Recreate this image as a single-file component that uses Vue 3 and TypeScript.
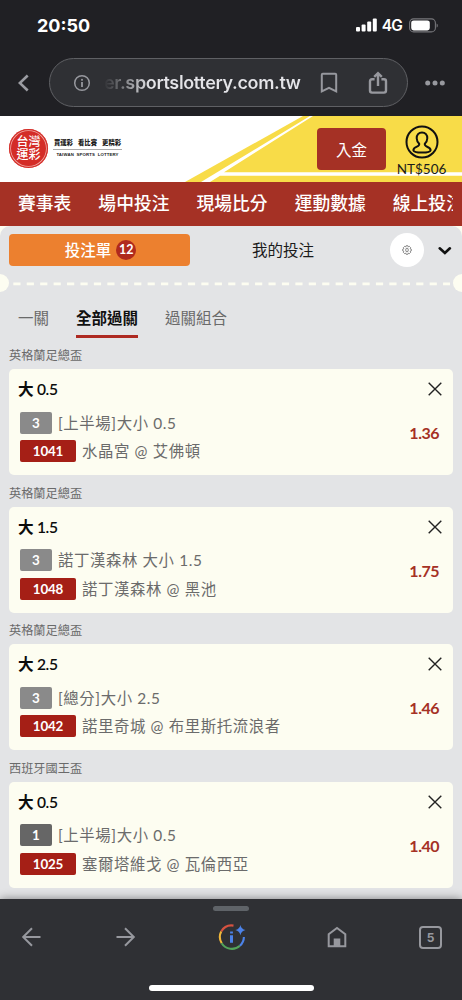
<script setup lang="ts">
interface Bet {
  league: string
  pick: string
  min: number
  market: string
  code: string
  match: string
  odds: string
}

const navItems: string[] = ['賽事表', '場中投注', '現場比分', '運動數據', '線上投注']

const bets: Bet[] = [
  { league: '英格蘭足總盃', pick: '大 0.5', min: 3, market: '[上半場]大小 0.5', code: '1041', match: '水晶宮 @ 艾佛頓', odds: '1.36' },
  { league: '英格蘭足總盃', pick: '大 1.5', min: 3, market: '諾丁漢森林 大小 1.5', code: '1048', match: '諾丁漢森林 @ 黑池', odds: '1.75' },
  { league: '英格蘭足總盃', pick: '大 2.5', min: 3, market: '[總分]大小 2.5', code: '1042', match: '諾里奇城 @ 布里斯托流浪者', odds: '1.46' },
  { league: '西班牙國王盃', pick: '大 0.5', min: 1, market: '[上半場]大小 0.5', code: '1025', match: '塞爾塔維戈 @ 瓦倫西亞', odds: '1.40' },
]
</script>

<template>
  <div class="phone">
    <div class="status">
      <span class="clock">20:50</span>
      <div class="status-right">
        <svg class="signal" width="21" height="14" viewBox="0 0 21 14" fill="#fff">
          <rect x="0" y="9" width="4" height="4.6" rx="1" />
          <rect x="5.6" y="6.5" width="4" height="7.1" rx="1" />
          <rect x="11.2" y="3.6" width="4" height="10" rx="1" />
          <rect x="16.8" y="0.4" width="4" height="13.2" rx="1" />
        </svg>
        <span class="net">4G</span>
        <svg width="30" height="15" viewBox="0 0 30 15">
          <rect x="0.6" y="0.9" width="25.8" height="13" rx="4" fill="none" stroke="#77777b" stroke-width="1.1" />
          <rect x="2.2" y="2.4" width="18.6" height="10" rx="2.4" fill="#fff" />
          <path d="M27.6 5.4c1.6.6 1.6 3.6 0 4.2z" fill="#77777b" />
        </svg>
      </div>
    </div>

    <div class="toolbar">
      <svg class="back" width="12" height="18" viewBox="0 0 12 18">
        <path d="M9.7 1.5 1.800 9l7.900 7.500" fill="none" stroke="#9b9ca2" stroke-width="2.6" />
      </svg>
      <div class="omnibox">
        <svg class="info" width="18" height="18" viewBox="0 0 18 18">
          <circle cx="9" cy="9" r="7.3" fill="none" stroke="#97989e" stroke-width="1.5" />
          <rect x="8.1" y="8" width="1.8" height="5" fill="#97989e" />
          <rect x="8.1" y="4.9" width="1.8" height="1.8" fill="#97989e" />
        </svg>
        <span class="url">er.sportslottery.com.tw</span>
        <svg class="bookmark" width="18" height="22" viewBox="0 0 18 22">
          <path d="M1.8 2.8q0-1 1-1h12.4q1 0 1 1v16.6L9 15.8l-7.2 3.6z" fill="none" stroke="#97989e" stroke-width="2" />
        </svg>
        <svg class="share" width="20" height="24" viewBox="0 0 20 24">
          <path d="M6.600 8.300H4q-2 0-2 2v9.300q0 2 2 2h12q2 0 2-2v-9.300q0-2-2-2h-2.600M10 15V3M6.200 5.900 10 2.100l3.800 3.800" fill="none" stroke="#97989e" stroke-width="2.400" />
        </svg>
      </div>
      <svg class="more" width="20" height="6" viewBox="0 0 20 6" fill="#97989e">
        <circle cx="2.7" cy="3" r="2.5" /><circle cx="10" cy="3" r="2.5" /><circle cx="17.3" cy="3" r="2.5" />
      </svg>
    </div>

    <header class="brand">
      <svg class="stripes" width="462" height="66" viewBox="0 0 462 66">
        <path d="M303 0H462V66H185z" fill="#f8dc48" />
        <path d="M310 0h3L224 56.300H462v3.400H220L210 66h-9z" fill="#fff" />
      </svg>
      <div class="logo">
        <div class="seal"><span>台灣</span><span>運彩</span></div>
        <div class="slogan">
          <div class="zh"><span>買運彩</span><span>看比賽</span><span>更精彩</span></div>
          <div class="en">TAIWAN&nbsp; SPORTS&nbsp; LOTTERY</div>
        </div>
      </div>
      <button class="deposit">入金</button>
      <div class="account">
        <svg width="34" height="34" viewBox="0 0 34 34" fill="none" stroke="#111" stroke-width="2">
          <circle cx="17" cy="17" r="15.5" />
          <path d="M17 7.500c-3.400 0-5.400 2.600-5.300 5.700.1 2.400 1.100 4.300 2.500 5.600.3 1.600-.6 2.200-2.300 2.900-2.300.9-3.600 2.200-3.500 3.600.2 1.700 4.200 2.200 8.600 2.200s8.400-.5 8.600-2.200c.1-1.400-1.200-2.700-3.500-3.600-1.700-.7-2.600-1.300-2.300-2.900 1.400-1.300 2.400-3.200 2.500-5.600.1-3.100-1.900-5.700-5.300-5.700z" stroke-linejoin="round" />
        </svg>
        <span>NT$506</span>
      </div>
    </header>

    <nav class="nav"><div class="nav-track">
      <span v-for="item in navItems" :key="item">{{ item }}</span>
    </div></nav>

    <main class="slip">
      <section class="panel">
        <div class="slip-head">
          <div class="slip-tab">投注單<b>12</b></div>
          <div class="mine">我的投注</div>
          <div class="gear">
            <svg width="10" height="10" viewBox="0 0 10 10" fill="none" stroke="#555" stroke-width="0.7">
              <path d="M4 .8h2l.4 1 1-.4 1.200 1.200-.4 1 1 .4v2l-1 .4.4 1-1.200 1.200-1-.4-.4 1H4l-.4-1-1 .4-1.200-1.200.4-1-1-.4V4l1-.4-.4-1 1.200-1.200 1 .4z" />
              <ellipse cx="5" cy="5" rx="1.3" ry="1.9" />
            </svg>
          </div>
          <svg class="chev" width="14" height="9" viewBox="0 0 14 9">
            <path d="M1.700 2.300 6.900 7l5-4.700" fill="none" stroke="#111" stroke-width="2.6" stroke-linecap="round" />
          </svg>
        </div>
        <svg class="perforation" width="462" height="18" viewBox="0 0 462 18" fill="#fdfdf1">
          <circle cx="0" cy="9" r="9" />
          <circle cx="462" cy="9" r="9" />
          <path d="M13.3 9.9H450" fill="none" stroke="#fdfdf1" stroke-width="2.8" stroke-dasharray="7.2 6.230" />
        </svg>
        <div class="modes">
          <span>一關</span><span class="on">全部過關</span><span>過關組合</span>
        </div>
        <div v-for="bet in bets" :key="bet.code" class="entry">
          <div class="league">{{ bet.league }}</div>
          <article class="card">
            <div class="pick">{{ bet.pick }}</div>
            <svg class="close" width="14" height="14" viewBox="0 0 14 14">
              <path d="M.7.7 13.300 13.300M13.300.7.7 13.300" stroke="#222" stroke-width="1.4" />
            </svg>
            <div class="row"><span class="tag" :class="{ dark: bet.min === 1 }">{{ bet.min }}</span><span class="label">{{ bet.market }}</span></div>
            <div class="row"><span class="tag code">{{ bet.code }}</span><span class="label">{{ bet.match }}</span></div>
            <div class="odds">{{ bet.odds }}</div>
          </article>
        </div>
      </section>
    </main>

    <footer class="bottom">
      <div class="handle"></div>
      <div class="icons">
        <svg width="20" height="20" viewBox="0 0 20 20" fill="none" stroke="#97989e" stroke-width="2">
          <path d="M19.5 10H2M11 1.200 2.200 10l8.800 8.800" />
        </svg>
        <svg class="forward" width="20" height="20" viewBox="0 0 20 20" fill="none" stroke="#97989e" stroke-width="2">
          <path d="M.5 10H18M9 1.200l8.800 8.800L9 18.800" />
        </svg>
        <svg class="assist" width="28" height="28" viewBox="0 0 28 28" fill="none" stroke-width="2.1">
          <path d="M3.200 8.500A12 12 0 0 1 15.500 2.600" stroke="#d65240" />
          <path d="M3.200 8.500a12 12 0 0 0 .5 11.700" stroke="#f0b73a" />
          <path d="M3.700 20.200a12 12 0 0 0 18.200 2.600" stroke="#53a45a" />
          <path d="M21.900 22.800a12 12 0 0 0 4-8.800" stroke="#4c82e8" />
          <path d="M12 12.200h3v7.600h-3zM12.100 8.500h2.800v2h-2.800z" fill="#4c82e8" />
          <path d="M22.400 2q.9 4.200 5.100 5.100-4.200.9-5.100 5.100-.9-4.200-5.100-5.100 4.200-.9 5.100-5.100z" fill="#4c82e8" />
        </svg>
        <svg class="home" width="20" height="22" viewBox="0 0 20 22">
          <path d="M1.700 20.300V8.200L10 2l8.300 6.200v12.100z" fill="none" stroke="#97989e" stroke-width="2" />
          <path d="M6.700 12.500h6.600v7.500H6.700z" fill="#97989e" />
        </svg>
        <div class="tabs-count">5</div>
      </div>
      <div class="home-bar"></div>
    </footer>
  </div>
</template>

<style>
body {
  margin: 0;
  overflow: hidden;
}
</style>

<style scoped>
.phone {
  width: 462px;
  height: 1000px;
  display: flex;
  flex-direction: column;
  overflow: hidden;
  background: #202024;
  font-family: Lato, "Noto Sans CJK TC", sans-serif;
  color: #1b1b1b;
  white-space: nowrap;
}
.phone * { box-sizing: border-box; }
svg { display: block; flex: none; }

.status {
  height: 50px;
  flex: none;
  display: flex;
  justify-content: space-between;
  align-items: center;
  padding: 0 23.5px 0 37px;
  font-family: Inter, "Liberation Sans", sans-serif;
  color: #fff;
}
.clock { font-size: 18px; font-weight: 700; letter-spacing: 0; }
.status-right { display: flex; align-items: center; }
.net { font-size: 15.5px; font-weight: 600; margin: 0 6.5px 0 5px; letter-spacing: -0.9px; }

.toolbar {
  height: 66px;
  flex: none;
  display: flex;
  align-items: center;
  padding: 0 17px 1px 18px;
}
.omnibox {
  width: 359px;
  height: 49px;
  margin-left: 19px;
  border: 1px solid #5f6064;
  border-radius: 25px;
  background: #2f3034;
  display: flex;
  align-items: center;
  padding: 0 18px 0 23px;
}
.url {
  margin-left: 13px;
  width: 225px;
  flex: none;
  font: 600 18px/24px Inter, "Liberation Sans", sans-serif;
  letter-spacing: -0.35px;
  color: transparent;
  background: linear-gradient(90deg, #2f3034 0, #77787c 18px, #e4e4e8 46px);
  background-clip: text;
}
.bookmark { margin-left: -9px; }
.share { margin-left: 30px; }
.more { margin-left: 17px; }

.brand {
  position: relative;
  height: 66px;
  flex: none;
  display: flex;
  background: #fff;
}
.stripes { position: absolute; inset: 0; }
.logo { position: relative; display: flex; padding: 13px 0 0 9px; width: 317px; }
.seal {
  width: 39px;
  height: 39px;
  border-radius: 50%;
  background: #d42c27;
  box-shadow: inset 0 0 0 1.2px #d42c27, inset 0 0 0 2px #f0a9a4;
  display: flex;
  flex-direction: column;
  align-items: center;
  justify-content: center;
  color: #fff;
  font-size: 12px;
  line-height: 12.5px;
  font-weight: 500;
}
.slogan { margin: 9px 0 0 5px; width: 69px; }
.zh {
  display: flex;
  justify-content: space-between;
  padding: 0 1px 2px;
  height: 12px;
  border-bottom: 1px solid #aaa;
  font-size: 6.3px;
  line-height: 10px;
  font-weight: 900;
}
.en {
  margin-top: 1px;
  font: 700 4.3px/7px "Liberation Sans", sans-serif;
  text-align: center;
  letter-spacing: 0.14px;
}
.deposit {
  position: relative;
  width: 69px;
  height: 42px;
  margin: 12px 0 0;
  padding: 0;
  border: 0;
  border-radius: 4px;
  background: #a53125;
  color: #fff;
  font: 400 15.5px/42px "Noto Sans CJK TC", sans-serif;
}
.account {
  position: relative;
  width: 71px;
  padding-top: 8.5px;
  display: flex;
  flex-direction: column;
  align-items: center;
  font-size: 13.5px;
  line-height: 16px;
}
.account span { margin-top: 2px; }

.nav {
  height: 44px;
  flex: none;
  background: #a53125;
  padding: 0 9px 0 18px;
}
.nav-track {
  display: flex;
  gap: 27px;
  overflow: hidden;
  color: #fff;
  font-size: 17.8px;
  font-weight: 500;
  line-height: 43px;
}
.nav-track span { flex: none; }

.slip { height: 673px; flex: none; background: #fdfdf1; overflow: hidden; }
.panel { height: 680px; border-radius: 10px 10px 0 0; background: #e3e4e6; }
.slip-head { height: 48px; display: flex; align-items: center; padding-left: 9px; }
.slip-tab {
  width: 181px;
  height: 32px;
  padding-left: 2px;
  border-radius: 4px;
  background: #ec802f;
  color: #fff;
  display: flex;
  align-items: center;
  justify-content: center;
  font-size: 15.5px;
  font-weight: 500;
  line-height: 32px;
}
.slip-tab b {
  width: 20px;
  height: 20px;
  margin-left: 5px;
  border-radius: 50%;
  background: #b02a1d;
  font-size: 12.5px;
  line-height: 20px;
  text-align: center;
}
.mine { width: 200px; padding-left: 62px; font-size: 15.5px; line-height: 32px; }
.gear {
  width: 34px;
  height: 34px;
  border-radius: 50%;
  background: #fff;
  display: flex;
  align-items: center;
  justify-content: center;
}
.chev { margin-left: 14px; }
.perforation { margin-top: -0.5px; }
.modes {
  display: flex;
  gap: 27px;
  height: 46.5px;
  padding: 12px 0 0 18px;
  font-size: 15.5px;
  line-height: 29px;
  color: #6a6a6a;
}
.modes span { height: 34.5px; }
.modes .on { color: #111; font-weight: 700; border-bottom: 3px solid #ae2a22; }
.entry { height: 137.5px; }
.league {
  height: 31px;
  padding: 7px 0 0 9px;
  font-size: 12.2px;
  line-height: 22px;
  color: #6a6a6a;
}
.card {
  position: relative;
  width: 444px;
  height: 106px;
  margin-left: 9px;
  padding: 8px 11px 0;
  border-radius: 5px;
  background: #fdfdf1;
}
.pick {
  height: 34.5px;
  margin-left: -2px;
  font-size: 15.6px;
  line-height: 24px;
  font-weight: 600;
  letter-spacing: -0.3px;
  color: #0c0c0c;
}
.row { display: flex; align-items: center; height: 22px; margin-bottom: 6.5px; }
.tag {
  width: 32px;
  height: 22px;
  border-radius: 2px;
  background: #8a8a8a;
  color: #fff;
  font-size: 13.4px;
  font-weight: 700;
  line-height: 22px;
  text-align: center;
}
.tag.dark { background: #666; }
.tag.code { width: 56px; background: #a51f16; letter-spacing: -0.2px; }
.label {
  margin-left: 6px;
  font-size: 15.4px;
  line-height: 22px;
  letter-spacing: 0.62px;
  color: #6b6b6b;
}
.close { position: absolute; right: 11.5px; top: 13px; }
.odds {
  position: absolute;
  right: 14px;
  top: 54px;
  font-size: 16px;
  line-height: 20px;
  font-weight: 700;
  letter-spacing: -0.5px;
  color: #a53125;
}

.bottom {
  position: relative;
  height: 101px;
  flex: none;
  background: #2f3034;
  box-shadow: 0 0 9px rgba(0, 0, 0, 0.45);
  display: flex;
  flex-direction: column;
  align-items: center;
}
.handle { width: 36px; height: 5px; margin-top: 7px; border-radius: 3px; background: #5f6368; flex: none; }
.icons {
  width: 100%;
  height: 52px;
  display: flex;
  align-items: center;
  padding-left: 21px;
}
.forward { margin-left: 74.5px; }
.assist { margin-left: 82px; }
.home { margin-left: 81.5px; }
.tabs-count {
  width: 23px;
  height: 23px;
  margin-left: 72px;
  border: 2px solid #97989e;
  border-radius: 4px;
  color: #97989e;
  font: 700 12px/19px Inter, "Liberation Sans", sans-serif;
  text-align: center;
}
.home-bar { width: 165px; height: 6px; margin-top: 22px; border-radius: 3px; background: #fff; }
</style>
